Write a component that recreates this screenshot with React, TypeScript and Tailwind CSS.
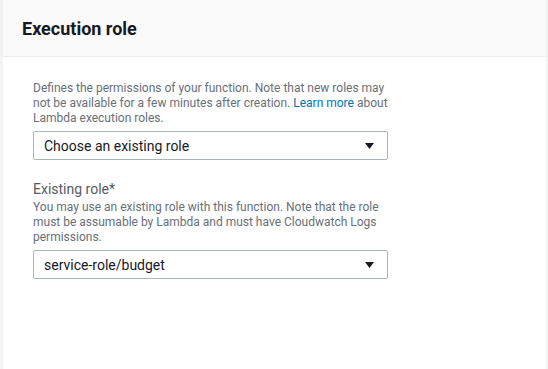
const Caret = () => (
  <svg width="9" height="6" viewBox="0 0 9 6" className="shrink-0">
    <path d="M0 0h9L4.5 6z" fill="#16191f" />
  </svg>
);

interface SelectBoxProps {
  value: string;
}

const SelectBox = ({ value }: SelectBoxProps) => (
  <div className="flex h-[29px] w-[355px] items-center justify-between rounded-[2px] border border-[#aab7b8] bg-white pl-[10px] pr-[13px]">
    <span className="text-[14px] leading-none text-[#16191f]">{value}</span>
    <Caret />
  </div>
);

export default function App() {
  return (
    <div
      className="flex h-[369px] w-[548px] bg-[#f2f3f3] pl-[3px] pr-[2px]"
      style={{ fontFamily: "Roboto, 'Liberation Sans', sans-serif" }}
    >
      <div className="flex flex-1 flex-col bg-white">
        <div className="flex h-[57px] items-center border-b border-[#eaeded] bg-[#fafafa] px-[19px]">
          <h2 className="text-[18px] font-bold text-[#16191f]">Execution role</h2>
        </div>

        <div className="flex flex-col pl-[30px] pt-[24px]">
          <p className="w-[360px] text-[12px] leading-[15px] text-[#687078]">
            Defines the permissions of your function. Note that new roles may
            <br />
            not be available for a few minutes after creation.{" "}
            <a className="text-[#0073bb]">Learn more</a> about
            <br />
            Lambda execution roles.
          </p>
          <div className="mt-[5px]">
            <SelectBox value="Choose an existing role" />
          </div>

          <label className="mt-[20px] text-[14px] leading-[18px] text-[#545b64]">
            Existing role*
          </label>
          <p className="mt-[2px] w-[360px] text-[12px] leading-[15px] text-[#687078]">
            You may use an existing role with this function. Note that the role
            <br />
            must be assumable by Lambda and must have Cloudwatch Logs
            <br />
            permissions.
          </p>
          <div className="mt-[5px]">
            <SelectBox value="service-role/budget" />
          </div>
        </div>
      </div>
    </div>
  );
}
